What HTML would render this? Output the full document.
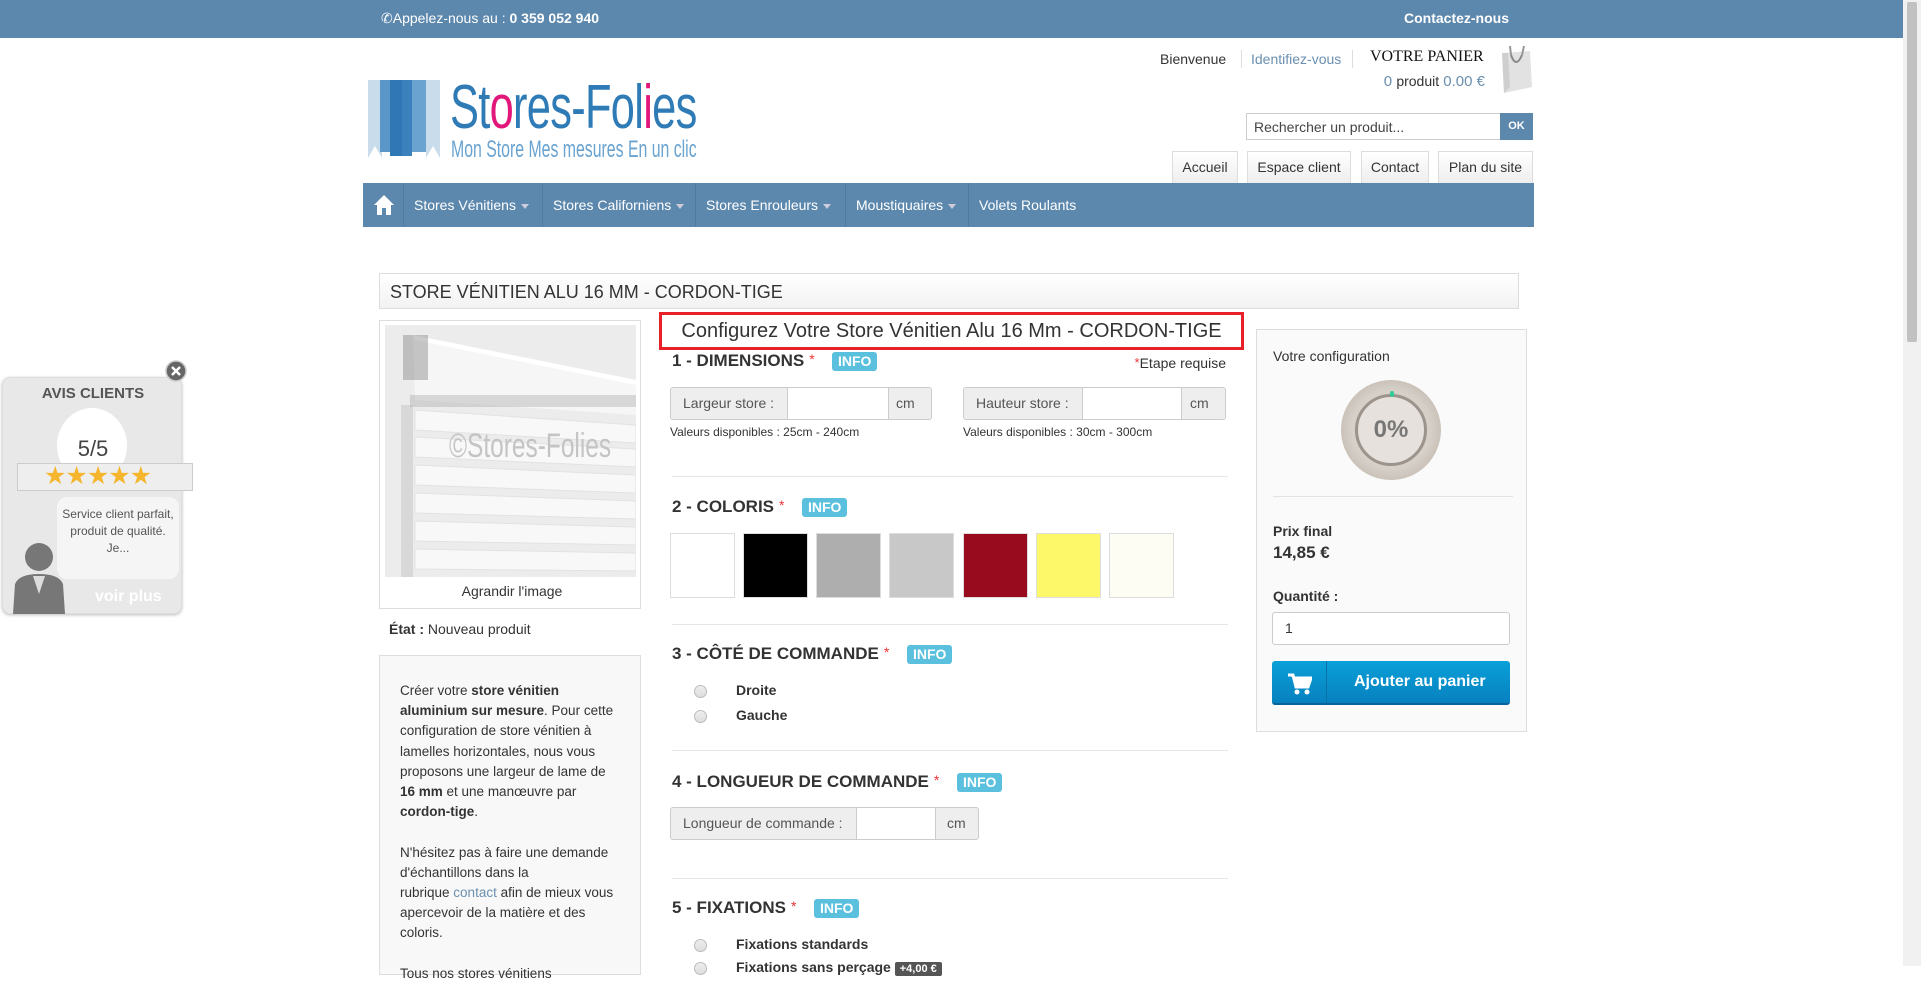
<!DOCTYPE html>
<html><head><meta charset="utf-8"><style>
*{box-sizing:border-box;margin:0;padding:0}
body{width:1921px;height:966px;overflow:hidden;background:#fff;font-family:"Liberation Sans",Arial,sans-serif;color:#333;position:relative;font-size:14px}
.a{position:absolute}
.top{left:0;top:0;width:1903px;height:38px;background:#5d88ad;color:#fff;font-size:14px}
.sb{left:1903px;top:0;width:18px;height:966px;background:#f1f1f1}
.sb div{position:absolute;left:4px;top:2px;width:10px;height:340px;background:#c1c1c1;border-radius:2px}
.btn{position:absolute;top:151px;height:32px;border:1px solid #ddd;border-bottom:none;background:linear-gradient(#fff,#eee);font-size:14px;color:#333;text-align:center;line-height:31px}
.nav{left:363px;top:183px;width:1173px;height:44px;background:#5d88ad}
.nav div{position:absolute;top:0;height:44px;line-height:44px;color:#fff;font-size:14px;padding-left:10px;border-right:1px solid #527aa0}
.car{display:inline-block;border-left:4px solid transparent;border-right:4px solid transparent;border-top:5px solid #ccd;margin-left:5px;vertical-align:middle}
h3{position:absolute;font-size:17px;font-weight:bold;color:#333;left:672px}
h3 .s{color:#e33;font-size:14px;vertical-align:top;margin-left:5px;font-weight:normal}
.info{position:absolute;background:#5bc0de;color:#fff;font-weight:bold;font-size:14px;border-radius:3px;height:19px;line-height:19px;padding:0 6px}
.ig{position:absolute;height:33px;border:1px solid #ccc;border-radius:3px;font-size:14px;color:#555;background:#eee}
.ig .l{position:absolute;top:0;height:31px;line-height:31px;padding-left:12px}
.ig .i{position:absolute;top:0;height:31px;background:#fff;border-left:1px solid #ccc;border-right:1px solid #ccc}
.val{position:absolute;font-size:12px;color:#333;top:425px}
.hr{position:absolute;left:672px;width:556px;height:1px;background:#e6e6e6}
.sw{position:absolute;top:533px;width:65px;height:65px;border:1px solid #ddd}
.rad{position:absolute;left:694px;width:13px;height:13px;border-radius:50%;border:1px solid #bbb;background:linear-gradient(#eee,#ddd)}
.rl{position:absolute;left:736px;font-weight:bold;font-size:14px;color:#333}
</style></head><body>
<div class="a top"><span class="a" style="left:381px;top:10px">&#x2706;Appelez-nous au : <b>0 359 052 940</b></span><b class="a" style="left:1404px;top:10px">Contactez-nous</b></div>
<div class="a sb"><div></div></div>

<svg class="a" style="left:368px;top:80px" width="72" height="78" viewBox="0 0 72 78">
<rect x="0" y="0" width="14" height="78" fill="#c9dceb"/><rect x="58" y="0" width="14" height="78" fill="#c9dceb"/>
<rect x="12" y="0" width="10" height="72" fill="#5a96c8"/><rect x="22" y="0" width="12" height="76" fill="#2f78b5"/><rect x="34" y="0" width="10" height="76" fill="#3b82bd"/><rect x="44" y="0" width="14" height="72" fill="#6aa3d0"/>
<polygon points="0,78 7,66 14,78" fill="#fff"/><polygon points="58,78 65,66 72,78" fill="#fff"/></svg>
<div class="a" style="left:450px;top:72px;font-size:62px;color:#2f7bb6;transform:scaleX(0.7);transform-origin:left;white-space:nowrap;letter-spacing:-1px">St<span style="color:#e2177a">o</span>res-Fol<span style="color:#e2177a">i</span>es</div>
<div class="a" style="left:451px;top:136px;font-size:24px;color:#6aa3d0;transform:scaleX(0.66);transform-origin:left;white-space:nowrap">Mon Store Mes mesures En un clic</div>

<div class="a" style="left:1160px;top:51px;font-size:14px">Bienvenue</div>
<div class="a" style="left:1241px;top:50px;width:1px;height:18px;background:#ddd"></div>
<div class="a" style="left:1251px;top:51px;font-size:14px;color:#6a8fb0">Identifiez-vous</div>
<div class="a" style="left:1352px;top:50px;width:1px;height:18px;background:#ddd"></div>
<div class="a" style="left:1370px;top:48px;font-family:'Liberation Serif',serif;font-size:16px;color:#111">VOTRE PANIER</div>
<div class="a" style="left:1380px;top:73px;font-size:15px;color:#6a8fb0;width:105px;text-align:right">0 <span style="color:#333;font-size:14px">produit</span> 0.00 €</div>
<svg class="a" style="left:1498px;top:43px" width="36" height="50"><polygon points="4,10 32,8 34,44 6,50" fill="#e2e2e2"/><polygon points="4,10 6,50 12,44 10,10" fill="#cfcfcf"/><path d="M13,12 Q18,26 24,12" stroke="#888" fill="none" stroke-width="2"/><path d="M13,12 L12,3 M24,12 L26,3" stroke="#999" stroke-width="2"/></svg>

<div class="a" style="left:1246px;top:113px;width:255px;height:27px;border:1px solid #ccc;font-size:14px;color:#444;padding:5px 7px">Rechercher un produit...</div>
<div class="a" style="left:1500px;top:113px;width:33px;height:27px;background:#5d88ad;color:#fff;font-size:11px;font-weight:bold;text-align:center;line-height:27px">OK</div>

<div class="btn" style="left:1172px;width:66px">Accueil</div>
<div class="btn" style="left:1247px;width:104px">Espace client</div>
<div class="btn" style="left:1361px;width:68px">Contact</div>
<div class="btn" style="left:1438px;width:95px">Plan du site</div>

<div class="a nav" style="width:1171px">
<div style="left:0;width:41px;padding:0"><svg style="position:absolute;left:11px;top:12px" width="20" height="20"><polygon points="10,0 20,10 17,10 17,20 3,20 3,10 0,10" fill="#fff"/><rect x="8" y="13" width="4" height="7" fill="#5d88ad"/></svg></div>
<div style="left:41px;width:139px">Stores Vénitiens<span class="car"></span></div>
<div style="left:180px;width:153px">Stores Californiens<span class="car"></span></div>
<div style="left:333px;width:150px">Stores Enrouleurs<span class="car"></span></div>
<div style="left:483px;width:123px">Moustiquaires<span class="car"></span></div>
<div style="left:606px;border:none">Volets Roulants</div>
</div>

<div class="a" style="left:2px;top:377px;width:180px;height:237px;background:#e8e8e8;border:1px solid #ddd;border-radius:8px;box-shadow:0 1px 3px #bbb">
<div class="a" style="left:0;top:7px;width:180px;text-align:center;font-weight:bold;font-size:15px;color:#555">AVIS CLIENTS</div>
<div class="a" style="left:54px;top:30px;width:70px;height:75px;background:#fff;border-radius:50%"></div>
<div class="a" style="left:0;top:58px;width:180px;text-align:center;font-size:22px;color:#444">5/5</div>
<div class="a" style="left:14px;top:85px;width:176px;height:28px;background:#eee;border:1px solid #ccc;color:#f5b52c;font-size:25px;line-height:25px;padding-left:26px;letter-spacing:-1px">★★★★★</div>
<div class="a" style="left:54px;top:119px;width:122px;height:82px;background:#f5f5f5;border-radius:10px;font-size:12px;color:#555;text-align:center;padding-top:9px;line-height:17px">Service client parfait, produit de qualité.<br>Je...</div>
<svg class="a" style="left:6px;top:160px" width="62" height="76"><circle cx="30" cy="19" r="14" fill="#777"/><path d="M4,76 L6,46 Q10,36 30,36 Q50,36 54,46 L56,76Z" fill="#777"/><path d="M24,38 L30,56 L36,38Z" fill="#ddd"/></svg>
<div class="a" style="left:92px;top:210px;color:#fff;font-weight:bold;font-size:16px">voir plus</div>
</div>
<svg class="a" style="left:165px;top:360px" width="22" height="22"><circle cx="11" cy="11" r="10" fill="#666" stroke="#ccc" stroke-width="1.5"/><path d="M7,7 L15,15 M15,7 L7,15" stroke="#fff" stroke-width="2.5"/></svg>

<div class="a" style="left:379px;top:273px;width:1140px;height:36px;border:1px solid #ddd;background:linear-gradient(#fff,#f2f2f2);font-size:18px;color:#333;padding:8px 10px">STORE VÉNITIEN ALU 16 MM - CORDON-TIGE</div>

<div class="a" style="left:379px;top:320px;width:262px;height:289px;border:1px solid #ddd"></div>
<svg class="a" style="left:385px;top:325px" width="251" height="252">
<rect width="251" height="252" fill="#ececec"/>
<polygon points="28,10 251,55 251,90 30,75" fill="#f6f6f6"/><polygon points="28,10 251,55 251,60 30,15" fill="#fff"/>
<rect x="25" y="70" width="227" height="12" fill="#aaa" opacity=".4"/>
<rect x="18" y="10" width="25" height="45" fill="#888" opacity=".45"/>
<g fill="#f8f8f8" stroke="#e2e2e2">
<polygon points="30,85 251,100 251,118 30,105"/><polygon points="30,112 251,124 251,142 30,132"/><polygon points="30,140 251,150 251,168 30,160"/><polygon points="30,168 251,176 251,194 30,188"/><polygon points="30,196 251,202 251,220 30,216"/><polygon points="30,224 251,228 251,246 30,244"/></g>
<rect x="16" y="80" width="12" height="172" fill="#aaa" opacity=".3"/>
<text x="64" y="132" font-family="Liberation Sans,sans-serif" font-size="34" fill="#c4c4c4" transform="translate(64 0) scale(0.72,1) translate(-64 0)">©Stores-Folies</text></svg>
<div class="a" style="left:379px;top:583px;width:266px;text-align:center;font-size:14px;color:#333">Agrandir l'image</div>
<div class="a" style="left:389px;top:621px;font-size:14px"><b>État :</b> Nouveau produit</div>

<div class="a" style="left:379px;top:655px;width:262px;height:320px;border:1px solid #ddd;background:#f8f8f8;font-size:13.5px;line-height:20.2px;padding:25px 24px 0 20px;color:#333">Créer votre <b>store vénitien aluminium sur mesure</b>. Pour cette configuration de store vénitien à lamelles horizontales, nous vous proposons une largeur de lame de <b>16 mm</b> et une manœuvre par <b>cordon-tige</b>.<br><br>N'hésitez pas à faire une demande d'échantillons dans la<br>rubrique <span style="color:#6a8fb0">contact</span> afin de mieux vous apercevoir de la matière et des coloris.<br><br>Tous nos stores vénitiens</div>

<div class="a" style="left:659px;top:312px;width:585px;height:38px;border:3px solid #e8202a;font-size:20px;color:#333;text-align:center;line-height:32px">Configurez Votre Store Vénitien Alu 16 Mm - CORDON-TIGE</div>

<h3 style="top:351px">1 - DIMENSIONS<span class="s">*</span></h3><div class="info" style="left:832px;top:352px">INFO</div>
<div class="a" style="left:1118px;top:355px;font-size:14px;width:108px;text-align:right"><span style="color:#e33;vertical-align:top;font-size:13px">*</span>Etape requise</div>
<div class="ig" style="left:670px;top:387px;width:262px"><span class="l">Largeur store :</span><span class="i" style="left:116px;width:102px"></span><span class="l" style="left:225px;padding:0">cm</span></div>
<div class="ig" style="left:963px;top:387px;width:263px"><span class="l">Hauteur store :</span><span class="i" style="left:118px;width:100px"></span><span class="l" style="left:226px;padding:0">cm</span></div>
<div class="val" style="left:670px">Valeurs disponibles : 25cm - 240cm</div>
<div class="val" style="left:963px">Valeurs disponibles : 30cm - 300cm</div>
<div class="hr" style="top:476px"></div>

<h3 style="top:497px">2 - COLORIS<span class="s">*</span></h3><div class="info" style="left:802px;top:498px">INFO</div>
<div class="sw" style="left:670px;background:#fff"></div>
<div class="sw" style="left:743px;background:#000"></div>
<div class="sw" style="left:816px;background:#aeaeae"></div>
<div class="sw" style="left:889px;background:#c8c8c8"></div>
<div class="sw" style="left:963px;background:#980a1e"></div>
<div class="sw" style="left:1036px;background:#fdf86a"></div>
<div class="sw" style="left:1109px;background:#fefdf3"></div>
<div class="hr" style="top:624px"></div>

<h3 style="top:644px">3 - CÔTÉ DE COMMANDE<span class="s">*</span></h3><div class="info" style="left:907px;top:645px">INFO</div>
<div class="rad" style="top:685px"></div><div class="rl" style="top:682px">Droite</div>
<div class="rad" style="top:710px"></div><div class="rl" style="top:707px">Gauche</div>
<div class="hr" style="top:750px"></div>

<h3 style="top:772px">4 - LONGUEUR DE COMMANDE<span class="s">*</span></h3><div class="info" style="left:957px;top:773px">INFO</div>
<div class="ig" style="left:670px;top:807px;width:309px"><span class="l">Longueur de commande :</span><span class="i" style="left:185px;width:80px"></span><span class="l" style="left:276px;padding:0">cm</span></div>
<div class="hr" style="top:878px"></div>

<h3 style="top:898px">5 - FIXATIONS<span class="s">*</span></h3><div class="info" style="left:814px;top:899px">INFO</div>
<div class="rad" style="top:939px"></div><div class="rl" style="top:936px">Fixations standards</div>
<div class="rad" style="top:962px"></div><div class="rl" style="top:959px">Fixations sans perçage <span style="background:#555;color:#fff;font-size:11px;padding:1px 5px;border-radius:2px">+4,00 €</span></div>

<div class="a" style="left:1256px;top:329px;width:271px;height:403px;border:1px solid #ddd;background:#fafafa"></div>
<div class="a" style="left:1273px;top:348px;font-size:14px">Votre configuration</div>
<div class="a" style="left:1341px;top:380px;width:100px;height:100px;border-radius:50%;background:radial-gradient(circle,#d6d0c9 55%,#cbc3ba 70%,#d8d2cb)"></div>
<div class="a" style="left:1355px;top:394px;width:72px;height:72px;border-radius:50%;border:3px solid #9c948c;background:#e6e1dc;text-align:center;line-height:66px;font-size:24px;font-weight:bold;color:#777">0%</div>
<div class="a" style="left:1390px;top:391px;width:4px;height:6px;background:#3c9;border-radius:2px"></div>
<div class="a" style="left:1273px;top:496px;width:240px;height:1px;background:#e3e3e3"></div>
<div class="a" style="left:1273px;top:523px;font-size:14px;font-weight:bold">Prix final</div>
<div class="a" style="left:1273px;top:543px;font-size:17px;font-weight:bold">14,85 €</div>
<div class="a" style="left:1273px;top:588px;font-size:14px;font-weight:bold">Quantité :</div>
<div class="a" style="left:1272px;top:612px;width:238px;height:33px;border:1px solid #ccc;border-radius:3px;background:#fff;font-size:14px;padding:7px 12px">1</div>
<div class="a" style="left:1272px;top:661px;width:238px;height:44px;border-radius:3px;background:linear-gradient(#0aa0d8,#0781bf);border-bottom:2px solid #06649a">
<div class="a" style="left:54px;top:0;width:1px;height:42px;background:#0670a8"></div>
<svg class="a" style="left:16px;top:12px" width="24" height="22"><path d="M0,2 H5 L8,14 H20 L23,5 H6" stroke="#fff" stroke-width="3" fill="#fff"/><circle cx="9" cy="19" r="2.5" fill="#fff"/><circle cx="19" cy="19" r="2.5" fill="#fff"/></svg>
<div class="a" style="left:82px;top:12px;color:#fff;font-weight:bold;font-size:16px">Ajouter au panier</div></div>
</body></html>
